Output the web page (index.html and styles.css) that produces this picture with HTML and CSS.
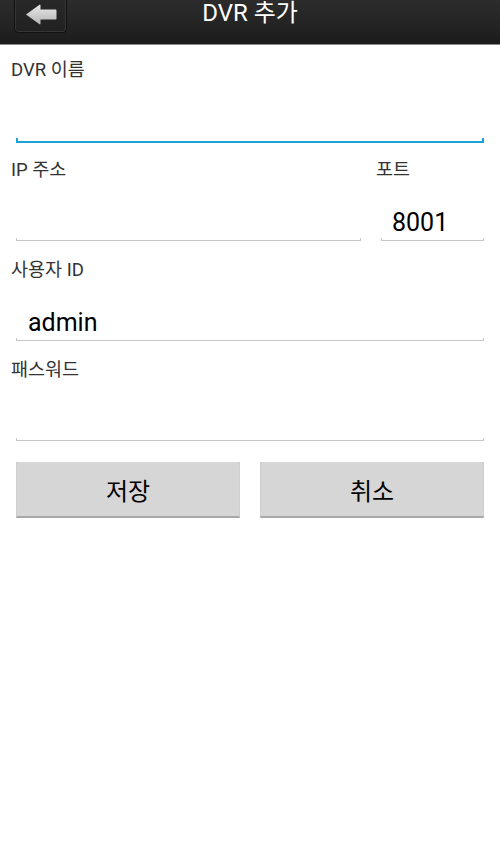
FILE: index.html
```html
<!DOCTYPE html>
<html lang="ko">
<head>
    <meta charset="UTF-8">
    <meta name="viewport" content="width=device-width, initial-scale=1.0">
    <title>DVR 추가</title>
    <link rel="stylesheet" href="styles.css">
</head>
<body>

<!-- Title bar -->
<div class="appbar">
    <div class="appbar-left">
        <button class="back-btn" type="button">
            <svg width="32" height="21" viewBox="0 0 32 21">
                <defs>
                    <linearGradient id="arrowFill" x1="0" y1="0" x2="0" y2="1">
                        <stop offset="0" stop-color="#e8e8e8"/>
                        <stop offset="1" stop-color="#b4b4b4"/>
                    </linearGradient>
                </defs>
                <path d="M1 10.5 L14.5 0.8 Q15.5 0.3 15.5 1.5 L15.5 5.5 L30.5 5.5 Q31.5 5.5 31.5 6.5 L31.5 14.5 Q31.5 15.5 30.5 15.5 L15.5 15.5 L15.5 19.5 Q15.5 20.7 14.5 20.2 Z" fill="url(#arrowFill)"/>
            </svg>
        </button>
    </div>
    <h1 class="appbar-title">DVR 추가</h1>
    <div class="appbar-right"></div>
</div>

<!-- Form -->
<div class="form">
    <div class="field">
        <label>DVR 이름</label>
        <div class="input focused">
            <span class="value"></span>
            <div class="line"></div>
        </div>
    </div>

    <div class="field-row">
        <div class="field">
            <label>IP 주소</label>
            <div class="input">
                <span class="value"></span>
                <div class="line"></div>
            </div>
        </div>
        <div class="field">
            <label>포트</label>
            <div class="input">
                <span class="value">8001</span>
                <div class="line"></div>
            </div>
        </div>
    </div>

    <div class="field">
        <label>사용자 ID</label>
        <div class="input">
            <span class="value">admin</span>
            <div class="line"></div>
        </div>
    </div>

    <div class="field">
        <label>패스워드</label>
        <div class="input">
            <span class="value"></span>
            <div class="line"></div>
        </div>
    </div>

    <div class="button-row">
        <button class="action-btn" type="button">저장</button>
        <button class="action-btn" type="button">취소</button>
    </div>
</div>

</body>
</html>
```

FILE: styles.css
```css
* {
    margin: 0;
    padding: 0;
    box-sizing: border-box;
}

body {
    font-family: Roboto, "Noto Sans CJK KR", sans-serif;
    background: #ffffff;
    color: #000;
    width: 500px;
    height: 854px;
    overflow: hidden;
}

/* Title bar */
.appbar {
    height: 45px;
    display: grid;
    grid-template-columns: 1fr auto 1fr;
    align-items: start;
    background: linear-gradient(180deg, #2c2c2c 0%, #232323 60%, #1b1b1b 100%);
    border-bottom: 1px solid #8a8a8a;
    overflow: hidden;
}

.back-btn {
    margin-left: 14px;
    margin-top: -8px;
    width: 53px;
    height: 41px;
    display: flex;
    align-items: center;
    justify-content: center;
    padding-top: 4px;
    background: linear-gradient(180deg, #2a2a2a, #212121);
    border: 1px solid #111;
    border-radius: 4px;
    box-shadow: inset 0 0 0 1px #353535;
    cursor: pointer;
}

.appbar-title {
    font-size: 24px;
    font-weight: normal;
    color: #fff;
    line-height: 28px;
    margin-top: -1px;
}

/* Form */
.form {
    padding: 13px 16px 0 11px;
}

.field {
    margin-bottom: 17px;
}

.field label {
    display: block;
    font-size: 18.5px;
    line-height: 20px;
    padding-top: 2px;
    height: 22px;
    color: #333;
}

.input {
    height: 61px;
    margin-left: 5px;
    display: flex;
    flex-direction: column;
    justify-content: flex-end;
}

.input .value {
    font-size: 25px;
    line-height: 30px;
    height: 30px;
    padding-left: 12px;
    color: #000;
}

.input .line {
    height: 3px;
    border: 1px solid #c6c6c6;
    border-top: none;
}

.input.focused {
    height: 63px;
}

.field:has(.focused) {
    margin-bottom: 15px;
}

.input.focused .line {
    height: 5px;
    border: 2px solid #1ba3d8;
    border-top: none;
}

.field-row {
    display: grid;
    grid-template-columns: 1fr 108px;
    column-gap: 15px;
}

.field-row .field:last-child .value {
    padding-left: 11px;
}

/* Buttons */
.button-row {
    margin-top: 21px;
    margin-left: 5px;
    display: grid;
    grid-template-columns: 1fr 1fr;
    column-gap: 20px;
}

.action-btn {
    height: 56px;
    font-family: inherit;
    font-size: 24px;
    color: #000;
    background: #d6d6d6;
    border: none;
    border-left: 1px solid #cfcfcf;
    border-right: 1px solid #cfcfcf;
    border-bottom: 2px solid #a9a9a9;
    cursor: pointer;
}
```
